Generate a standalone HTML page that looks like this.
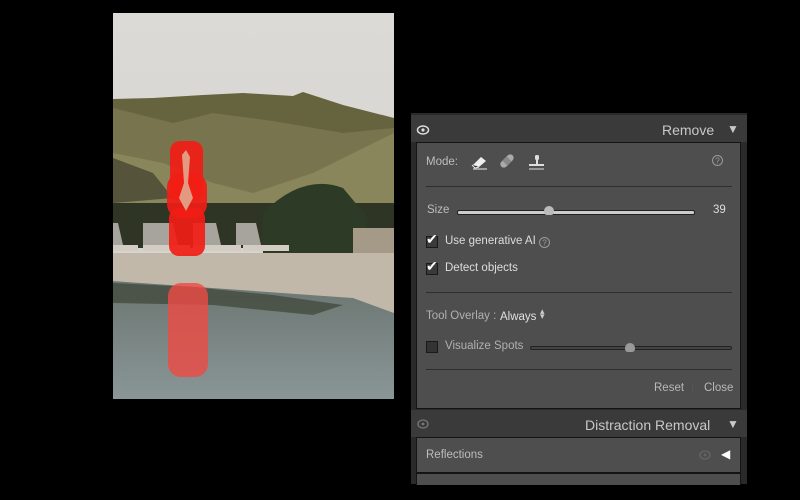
<!DOCTYPE html>
<html><head><meta charset="utf-8"><style>
body{margin:0;width:800px;height:500px;background:#000;position:relative;overflow:hidden;font-family:"Liberation Sans",sans-serif;}
.abs{position:absolute}
.t{position:absolute;color:#c4c4c4;font-size:11.5px;white-space:nowrap}
.hr{position:absolute;height:1px;background:#2e2e2e;left:426px;width:306px}
.cb{position:absolute;width:10px;height:10px;border:1px solid #1a1a1a;background:#3a3a3a}
</style></head><body>
<svg class="abs" style="left:113px;top:13px" width="281" height="386" viewBox="0 0 281 386">
<defs>
<linearGradient id="sky" x1="0" y1="0" x2="0" y2="1"><stop offset="0" stop-color="#dcdad6"/><stop offset="1" stop-color="#d2d0cb"/></linearGradient>
<linearGradient id="pool" x1="0" y1="0" x2="0" y2="1"><stop offset="0" stop-color="#6b7672"/><stop offset="1" stop-color="#8a9696"/></linearGradient>
</defs>
<rect width="281" height="386" fill="url(#sky)"/>
<path d="M0 86 L40 85 L90 82 L130 80 L180 83 L190 79 L230 92 L281 105 L281 200 L0 200 Z" fill="#66633f"/>
<path d="M0 95 L60 110 L100 100 L160 108 L230 120 L281 115 L281 200 L0 200 Z" fill="#78744d"/>
<path d="M0 140 L50 150 L100 170 L140 180 L200 160 L281 120 L281 200 L0 200 Z" fill="#8a865b"/>
<path d="M0 145 L40 160 L60 185 L0 190 Z" fill="#55543a"/>
<rect x="0" y="190" width="281" height="45" fill="#2f3524"/>
<path d="M150 200 Q190 160 230 175 L255 205 L250 240 L150 240 Z" fill="#2d3a25"/>
<rect x="240" y="215" width="41" height="25" fill="#a59a88"/>
<path d="M0 240 L281 240 L281 300 L240 285 L0 268 Z" fill="#c2b8a9"/>
<path d="M0 268 L240 285 L281 300 L281 386 L0 386 Z" fill="url(#pool)"/>
<path d="M0 270 L80 274 L160 282 L230 292 L200 302 L100 292 L0 290 Z" fill="#3d4436" opacity=".7"/>
<g fill="#a7a39d"><path d="M-5 210 L5 210 L10 232 L-5 232Z"/><path d="M30 210 L60 210 L65 232 L30 232Z"/><path d="M80 210 L103 210 L108 232 L80 232Z"/><path d="M123 210 L143 210 L148 232 L123 232Z"/></g>
<g fill="#d2ccc2"><rect x="-5" y="232" width="30" height="6"/><rect x="30" y="232" width="47" height="6"/><rect x="80" y="232" width="48" height="6"/><rect x="130" y="232" width="46" height="6"/></g>
<rect x="57" y="128" width="33" height="60" rx="10" fill="#f21d16" opacity=".92"/>
<rect x="54" y="160" width="40" height="45" rx="14" fill="#f21d16" opacity=".92"/>
<rect x="56" y="195" width="36" height="48" rx="10" fill="#f21d16" opacity=".92"/>
<path d="M69 142 L73 137 L77 144 L75 170 L80 185 L73 198 L66 185 L71 170 Z" fill="#e29a80"/>
<rect x="55" y="270" width="40" height="94" rx="13" fill="#ef4a44" opacity=".8"/>
</svg>

<div class="abs" style="left:411px;top:113px;width:336px;height:371px;background:#2a2a2a"></div>
<div class="abs" style="left:411px;top:115px;width:336px;height:27px;background:#3a3a3a"></div>
<div class="abs" style="left:416px;top:142px;width:323px;height:265px;background:#4e4e4e;border:1px solid #141414"></div>
<svg class="abs" style="left:416px;top:124px" width="14" height="12"><ellipse cx="7" cy="6" rx="5.5" ry="4" fill="none" stroke="#ddd" stroke-width="1.5"/><circle cx="7" cy="6" r="1.6" fill="#ddd"/></svg>
<div class="t" style="left:662px;top:122px;font-size:14px;color:#c8c8c8">Remove</div>
<div class="t" style="left:727px;top:122px;font-size:12px;color:#c8c8c8">▼</div>

<div class="t" style="left:426px;top:156px;color:#bdbdbd">Mode:</div>
<svg class="abs" style="left:470px;top:152px" width="80" height="20">
<path d="M3 13 L11 5 L16 9 L9 15 Z" fill="#eee"/><path d="M2 13 L5 16 L9 15" fill="#222" stroke="#eee"/><line x1="3" y1="17" x2="17" y2="17" stroke="#eee"/>
<g transform="translate(37 9) rotate(-45)"><rect x="-8" y="-3.5" width="16" height="7" rx="3.5" fill="#aaa"/><rect x="-3" y="-3.5" width="6" height="7" fill="#888"/></g>
<rect x="65" y="3" width="4" height="5" rx="1.5" fill="#ddd"/><rect x="66" y="7" width="2" height="5" fill="#ddd"/><rect x="59" y="12" width="15" height="2" fill="#ddd"/><line x1="59" y1="17" x2="74" y2="17" stroke="#ddd"/>
</svg>
<svg class="abs" style="left:711px;top:154px" width="13" height="13"><circle cx="6.5" cy="6.5" r="5" fill="none" stroke="#999"/><text x="6.5" y="9.5" font-size="8" text-anchor="middle" fill="#999" font-family="Liberation Sans">?</text></svg>
<div class="hr" style="top:186px"></div>

<div class="t" style="left:427px;top:204px;color:#bdbdbd">Size</div>
<div class="abs" style="left:457px;top:210px;width:236px;height:3px;background:#ccc;border:1px solid #222;border-radius:2px"></div>
<div class="abs" style="left:544px;top:206px;width:10px;height:9px;background:#bbb;border-radius:5px 5px 3px 3px"></div>
<div class="t" style="left:713px;top:204px;color:#ddd">39</div>

<div class="cb" style="left:426px;top:236px"></div><div class="t" style="left:426px;top:231px;font-size:14px;color:#fff">✔</div>
<div class="t" style="left:445px;top:235px;color:#ddd">Use generative AI</div>
<svg class="abs" style="left:538px;top:236px" width="13" height="13"><circle cx="6.5" cy="6.5" r="5" fill="none" stroke="#999"/><text x="6.5" y="9.5" font-size="8" text-anchor="middle" fill="#999" font-family="Liberation Sans">?</text></svg>
<div class="cb" style="left:426px;top:263px"></div><div class="t" style="left:426px;top:258px;font-size:14px;color:#fff">✔</div>
<div class="t" style="left:445px;top:262px;color:#ddd">Detect objects</div>
<div class="hr" style="top:292px"></div>

<div class="t" style="left:426px;top:310px;color:#b0b0b0">Tool Overlay :</div>
<div class="t" style="left:500px;top:311px;color:#e0e0e0">Always</div>
<div class="t" style="left:540px;top:309px;font-size:9px;line-height:5px;color:#ccc">▴<br>▾</div>
<div class="cb" style="left:426px;top:341px;background:#333"></div>
<div class="t" style="left:445px;top:340px;color:#b0b0b0">Visualize Spots</div>
<div class="abs" style="left:530px;top:346px;width:200px;height:2px;background:#444;border:1px solid #222;border-radius:2px"></div>
<div class="abs" style="left:625px;top:343px;width:10px;height:9px;background:#999;border-radius:5px 5px 3px 3px"></div>
<div class="hr" style="top:369px"></div>
<div class="t" style="left:654px;top:382px;color:#b8b8b8">Reset</div>
<div class="abs" style="left:692px;top:383px;width:1px;height:10px;background:#555"></div>
<div class="t" style="left:704px;top:382px;color:#b8b8b8">Close</div>

<div class="abs" style="left:411px;top:410px;width:336px;height:27px;background:#3a3a3a"></div>
<svg class="abs" style="left:416px;top:418px" width="14" height="12"><ellipse cx="7" cy="6" rx="5" ry="4" fill="none" stroke="#777" stroke-width="1.3"/><circle cx="7" cy="6" r="1.4" fill="#777"/></svg>
<div class="t" style="left:585px;top:417px;font-size:14px;color:#c8c8c8">Distraction Removal</div>
<div class="t" style="left:727px;top:417px;font-size:12px;color:#c8c8c8">▼</div>
<div class="abs" style="left:416px;top:437px;width:323px;height:34px;background:#4e4e4e;border:1px solid #141414"></div>
<div class="t" style="left:426px;top:449px;color:#bdbdbd">Reflections</div>
<svg class="abs" style="left:698px;top:449px" width="14" height="12"><ellipse cx="7" cy="6" rx="5" ry="4" fill="none" stroke="#666" stroke-width="1.3"/><circle cx="7" cy="6" r="1.4" fill="#666"/></svg>
<div class="t" style="left:721px;top:447px;font-size:12px;color:#fff">◀</div>
<div class="abs" style="left:416px;top:473px;width:323px;height:11px;background:#4e4e4e;border:1px solid #141414;border-bottom:none"></div>
</body></html>
